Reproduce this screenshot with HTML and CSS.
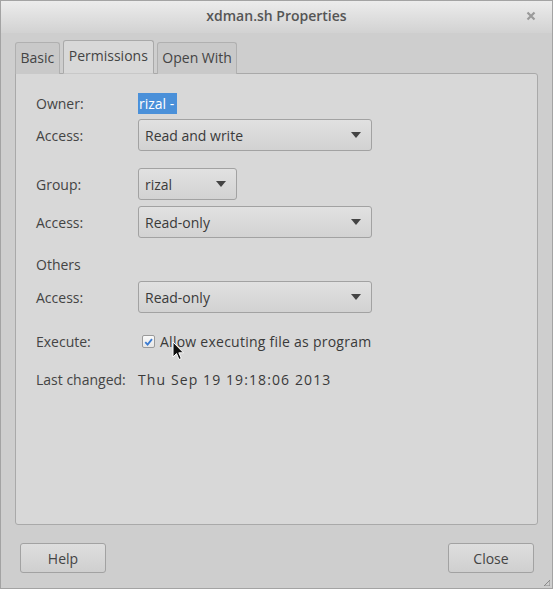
FILE: index.html
```html
<!DOCTYPE html>
<html>
<head>
<meta charset="utf-8">
<link rel="stylesheet" href="styles.css">
</head>
<body>
<div class="window">
  <div class="titlebar">
    <span class="title">xdman.sh Properties</span>
    <svg class="close-x" width="10" height="10" viewBox="0 0 10 10"><path d="M1.5 1.5 L8.5 8.5 M8.5 1.5 L1.5 8.5" stroke="#9a9a9a" stroke-width="2.2"/></svg>
  </div>
  <div class="content">
    <div class="tabs">
      <div class="tab">Basic</div>
      <div class="tab active">Permissions</div>
      <div class="tab">Open With</div>
    </div>
    <div class="panel">
      <div class="grid">
        <div class="label r-owner">Owner:</div>
        <div class="value r-owner"><span class="selected">rizal -</span></div>

        <div class="label">Access:</div>
        <div class="value"><div class="combo wide"><span>Read and write</span><i class="arrow"></i></div></div>

        <div class="label r-group">Group:</div>
        <div class="value r-group"><div class="combo narrow"><span>rizal</span><i class="arrow"></i></div></div>

        <div class="label">Access:</div>
        <div class="value"><div class="combo wide"><span>Read-only</span><i class="arrow"></i></div></div>

        <div class="label section r-others">Others</div>
        <div class="value r-others"></div>

        <div class="label">Access:</div>
        <div class="value"><div class="combo wide"><span>Read-only</span><i class="arrow"></i></div></div>

        <div class="label r-exec">Execute:</div>
        <div class="value r-exec check-row">
          <span class="checkbox"><svg width="12" height="12" viewBox="0 0 12 12"><path d="M2.5 6.2 L5 8.8 L9.8 2.8" fill="none" stroke="#3b7bd1" stroke-width="2"/></svg></span>
          <span class="check-label">Allow executing file as program</span>
          <svg class="cursor" width="13" height="21" viewBox="0 0 13 21"><path d="M1 1 L1 16 L4.5 12.5 L7 18.5 L9.3 17.5 L6.8 11.8 L11.5 11.8 Z" fill="#111" stroke="#fff" stroke-width="1"/></svg>
        </div>

        <div class="label r-last">Last changed:</div>
        <div class="value r-last date">Thu Sep 19 19:18:06 2013</div>
      </div>
    </div>
    <div class="buttons">
      <div class="btn">Help</div>
      <div class="btn">Close</div>
    </div>
    <svg class="grip" width="6" height="6" viewBox="0 0 6 6"><path d="M6 0 L6 6 L0 6 Z" fill="none" stroke="#8a8a8a" stroke-width="1"/></svg>
  </div>
</div>
</body>
</html>
```
FILE: styles.css
```css
* { box-sizing: border-box; }
html, body { margin: 0; padding: 0; }
body {
  width: 553px;
  height: 589px;
  font-family: "Open Sans", "Noto Sans", sans-serif;
  font-size: 14px;
  color: #3a3a3a;
  background: #cecece;
}
.window {
  width: 553px;
  height: 589px;
  border: 1px solid #a3a3a3;
  display: flex;
  flex-direction: column;
  background: #cecece;
  position: relative;
}
.titlebar {
  height: 32px;
  background: linear-gradient(#ececec, #d2d2d2);
  display: flex;
  align-items: center;
  justify-content: center;
  position: relative;
  flex: none;
}
.title {
  font-weight: 600;
  color: #555;
  font-size: 14px;
  margin-top: -4px;
}
.close-x {
  position: absolute;
  right: 16px;
  top: 10px;
}
.content {
  flex: 1;
  padding: 8px 14px 0 14px;
  display: flex;
  flex-direction: column;
  position: relative;
}
.tabs {
  display: flex;
  align-items: flex-end;
  gap: 3px;
  height: 33px;
  position: relative;
  z-index: 1;
  margin-bottom: -1px;
}
.tab {
  height: 32px;
  padding: 5px 4.5px 0 4.5px;
  border: 1px solid #b0b0b0;
  border-bottom: none;
  border-radius: 3px 3px 0 0;
  background: #c9c9c9;
  color: #444;
}
.tab.active {
  height: 34px;
  padding: 5px 5px 0 5px;
  background: #d8d8d8;
  border-color: #a9a9a9;
  border-bottom: 1px solid #c8c8c8;
}
.panel {
  height: 452px;
  background: #d8d8d8;
  border: 1px solid #a9a9a9;
  border-radius: 0 3px 3px 3px;
  padding: 19px 20px 0 20px;
}
.grid {
  display: grid;
  grid-template-columns: 102px 1fr;
  grid-auto-rows: auto;
  row-gap: 6px;
  align-items: center;
}
.label { color: #444; }
.value { display: flex; align-items: center; }
.r-owner + .label, .r-owner + .label + .value { margin-top: -1px; }
.selected {
  background: #4a90d9;
  color: #fff;
  padding: 0 3px 0 1px;
  line-height: 21px;
}
.combo {
  height: 32px;
  border: 1px solid #a2a2a2;
  border-radius: 3px;
  background: linear-gradient(#e1e1e1, #d2d2d2);
  display: flex;
  align-items: center;
  justify-content: space-between;
  padding: 0 10px 0 6px;
  color: #3a3a3a;
}
.combo.wide { width: 234px; }
.combo.narrow { width: 99px; }
.arrow {
  width: 0; height: 0;
  border-left: 5px solid transparent;
  border-right: 5px solid transparent;
  border-top: 6px solid #444;
}
.r-group { margin-top: 11px; }
.r-others { margin-top: 11px; height: 20px; }
.r-exec { margin-top: 13px; }
.r-last { margin-top: 13px; }
.check-row { position: relative; gap: 5px; padding-left: 4px; }
.check-label { letter-spacing: 0.25px; }
.date { letter-spacing: 1.1px; }
.checkbox {
  width: 13px; height: 13px;
  border: 1px solid #9a9a9a;
  border-radius: 2px;
  background: linear-gradient(#fafafa, #e6e6e6);
  display: flex; align-items: center; justify-content: center;
}
.checkbox svg { display: block; }
.cursor {
  position: absolute;
  left: 34px;
  top: 9px;
}
.buttons {
  display: flex;
  justify-content: space-between;
  padding: 18px 4px 0 5px;
}
.btn {
  width: 86px;
  height: 30px;
  border: 1px solid #a2a2a2;
  border-radius: 3px;
  background: linear-gradient(#dedede, #cfcfcf);
  display: flex;
  align-items: center;
  justify-content: center;
  color: #444;
}
.grip {
  position: absolute;
  right: 2px;
  bottom: 2px;
}
```
